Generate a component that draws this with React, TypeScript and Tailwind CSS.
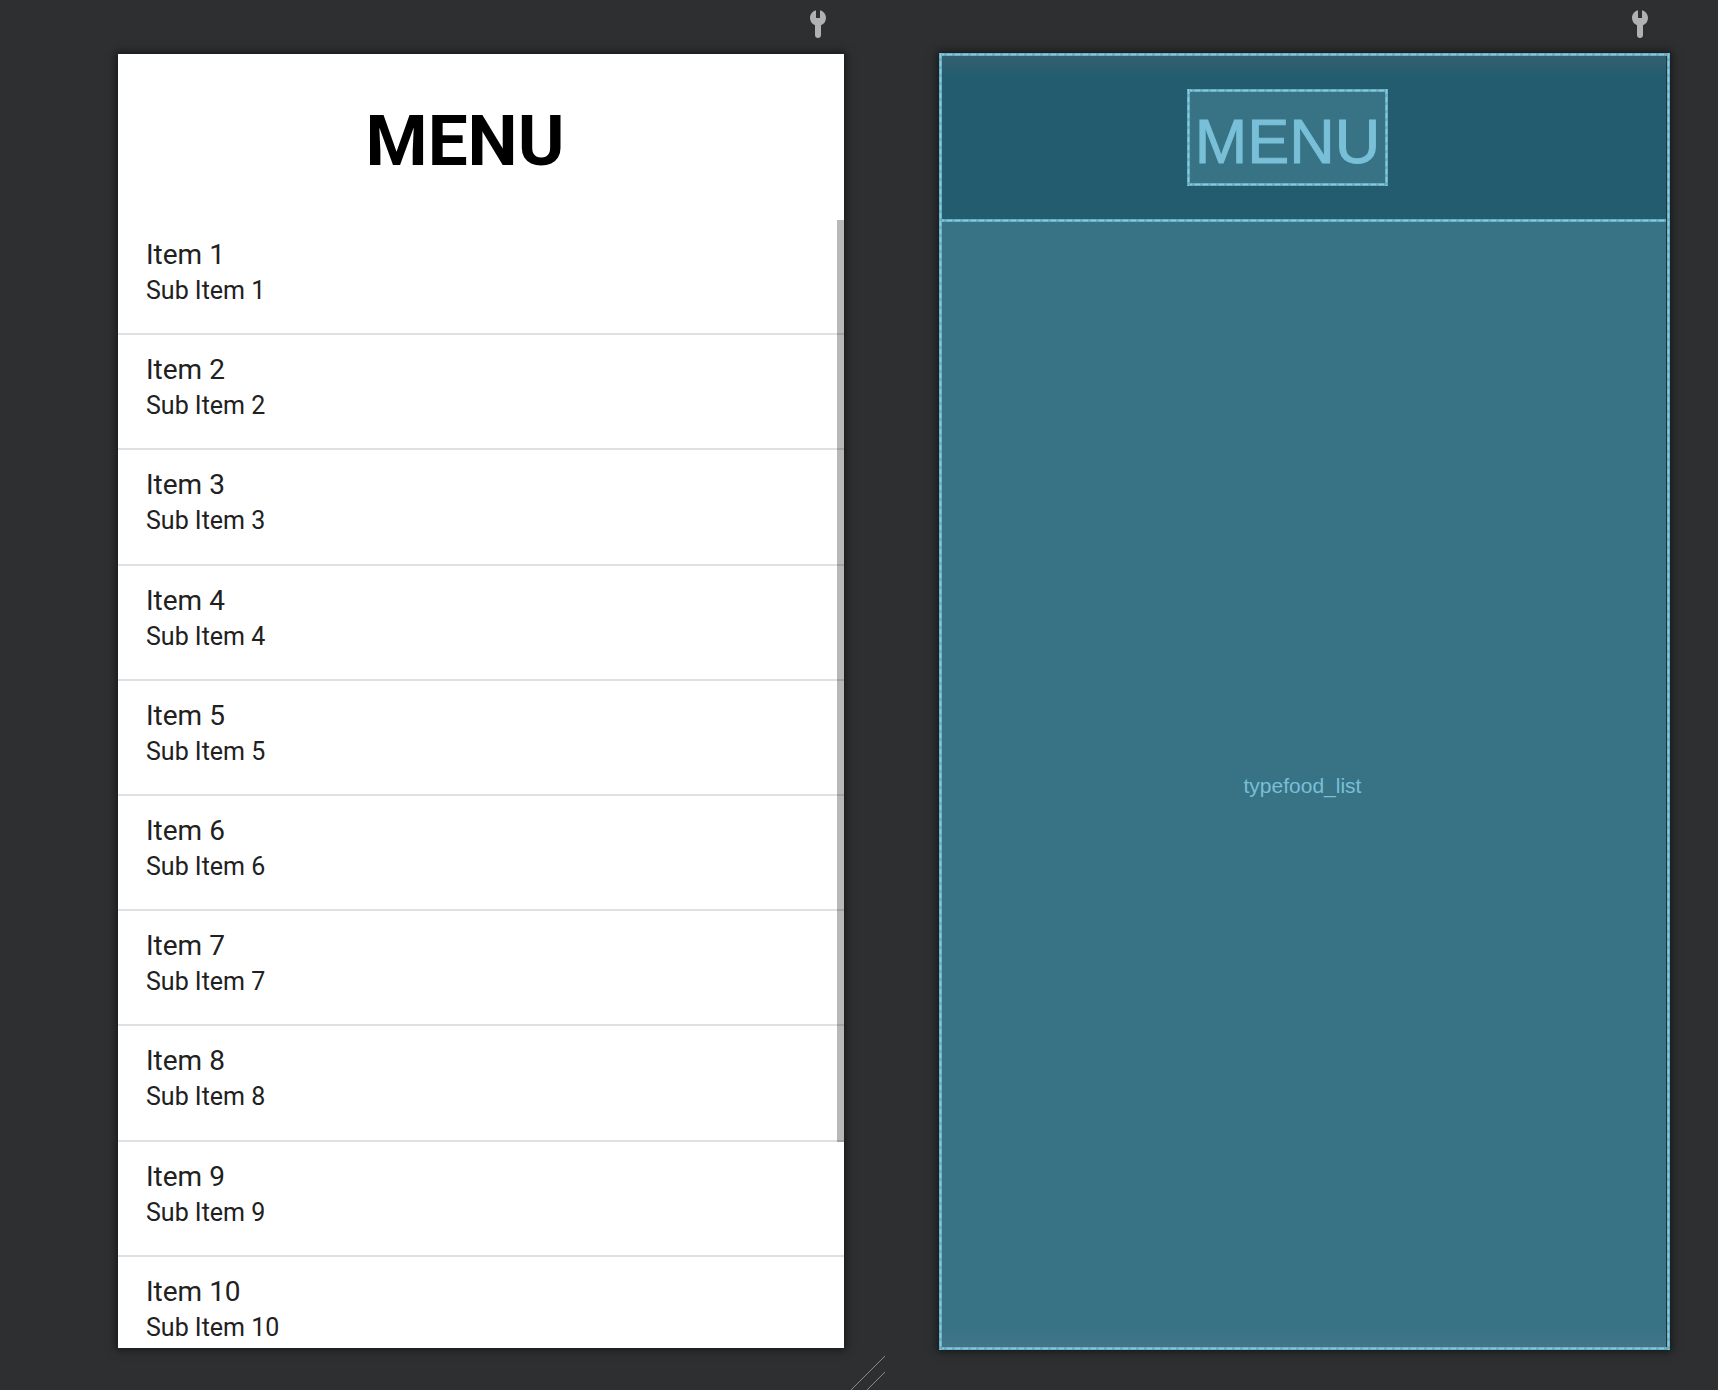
const items = Array.from({ length: 10 }, (_, i) => i + 1);

function Wrench() {
  return (
    <svg viewBox="0 0 16 28" className="h-7 w-4" fill="#afb1b3" aria-hidden="true">
      <path d="M6 0.2V8H10V0.2C13.6 1.2 16 4.2 16 7.9C16 11.2 14 14 11 15.2V25.2C11 26.8 9.7 28 8 28S5 26.8 5 25.2V15.2C2 14 0 11.2 0 7.9C0 4.2 2.4 1.2 6 0.2Z" />
    </svg>
  );
}

const dashX =
  "h-[3px] border-y border-[#5b9fb3]/60 bg-[repeating-linear-gradient(90deg,#84cce3_0px,#84cce3_5px,#6cb1c6_5px,#6cb1c6_8px)]";
const dashY =
  "w-[3px] border-x border-[#5b9fb3]/60 bg-[repeating-linear-gradient(180deg,#84cce3_0px,#84cce3_5px,#6cb1c6_5px,#6cb1c6_8px)]";

function Outline() {
  return (
    <div className="pointer-events-none absolute inset-0" aria-hidden="true">
      <div className={"absolute inset-x-0 top-0 " + dashX} />
      <div className={"absolute inset-x-0 bottom-0 " + dashX} />
      <div className={"absolute inset-y-0 left-0 " + dashY} />
      <div className={"absolute inset-y-0 right-0 " + dashY} />
    </div>
  );
}

export default function App() {
  return (
    <div className="relative flex h-screen flex-col overflow-hidden bg-[#2d2f31] pr-12 pl-[118px]">
      <div className="grid h-[53px] shrink-0 grid-cols-[726fr_731fr] gap-x-[95px] pt-2.5">
        <div className="flex justify-end pr-[18px]">
          <button type="button" aria-label="Design issues" className="h-7">
            <Wrench />
          </button>
        </div>
        <div className="flex justify-end pr-[22px]">
          <button type="button" aria-label="Blueprint issues" className="h-7">
            <Wrench />
          </button>
        </div>
      </div>
      <main className="grid min-h-0 flex-1 grid-cols-[726fr_731fr] gap-x-[95px]">
        <section className="relative mt-px mb-0.5 flex min-h-0 flex-col overflow-hidden bg-white font-[Roboto,sans-serif] shadow-[0_0_8px_2px_rgba(0,0,0,0.5)]">
          <header className="flex h-[166px] shrink-0 items-center justify-center pr-8">
            <h1 className="pt-2 text-[71px] leading-[84px] font-bold text-black">MENU</h1>
          </header>
          <div className="relative min-h-0 flex-1 overflow-hidden">
            <ul className="grid min-h-[1152px] auto-rows-fr">
              {items.map((n) => (
                <li key={n} className="border-b-2 border-[#e0e0e0] pt-[17px] pl-7 text-[#212121]">
                  <p className="text-[28px] leading-9">Item {n}</p>
                  <p className="text-[25px] leading-9">Sub Item {n}</p>
                </li>
              ))}
            </ul>
            <div className="absolute top-0 right-0 h-[922px] w-[7px] bg-black/28" />
          </div>
        </section>
        <section className="relative flex min-h-0 flex-col bg-[#245c6f] font-['Liberation_Sans',sans-serif] text-[#78bfd7] shadow-[0_0_8px_2px_rgba(0,0,0,0.5)]">
          <header className="flex h-[166px] shrink-0 items-center justify-center bg-linear-to-b from-[#366170] to-[#245c6f] to-[22px] pt-0.5 pr-[34px]">
            <div className="relative flex h-[97px] w-[201px] items-center justify-center bg-[#387385]">
              <h2 className="pt-2 text-[63px] leading-[72px] [-webkit-text-stroke:1px_#78bfd7]">MENU</h2>
              <Outline />
            </div>
          </header>
          <div className="flex min-h-0 flex-1 flex-col bg-[#387385]">
            <div className={"shrink-0 " + dashX} />
            <div className="flex flex-1 items-center justify-center pt-5 pr-1">
              <p className="text-[21px] leading-7">typefood_list</p>
            </div>
            <div className="h-5 shrink-0 bg-linear-to-b from-[#387385] to-[#457688]" />
          </div>
          <div className="pointer-events-none absolute inset-y-[3px] right-[3px] w-px bg-[#253238]" />
          <Outline />
        </section>
      </main>
      <footer className="flex h-10 shrink-0 items-end pl-[733px]">
        <svg viewBox="0 0 34 34" className="h-[34px] w-[34px]" fill="none" stroke="#8a8b8c" aria-hidden="true">
          <path d="M0 34L34 0M16 34L34 16" />
        </svg>
      </footer>
    </div>
  );
}
